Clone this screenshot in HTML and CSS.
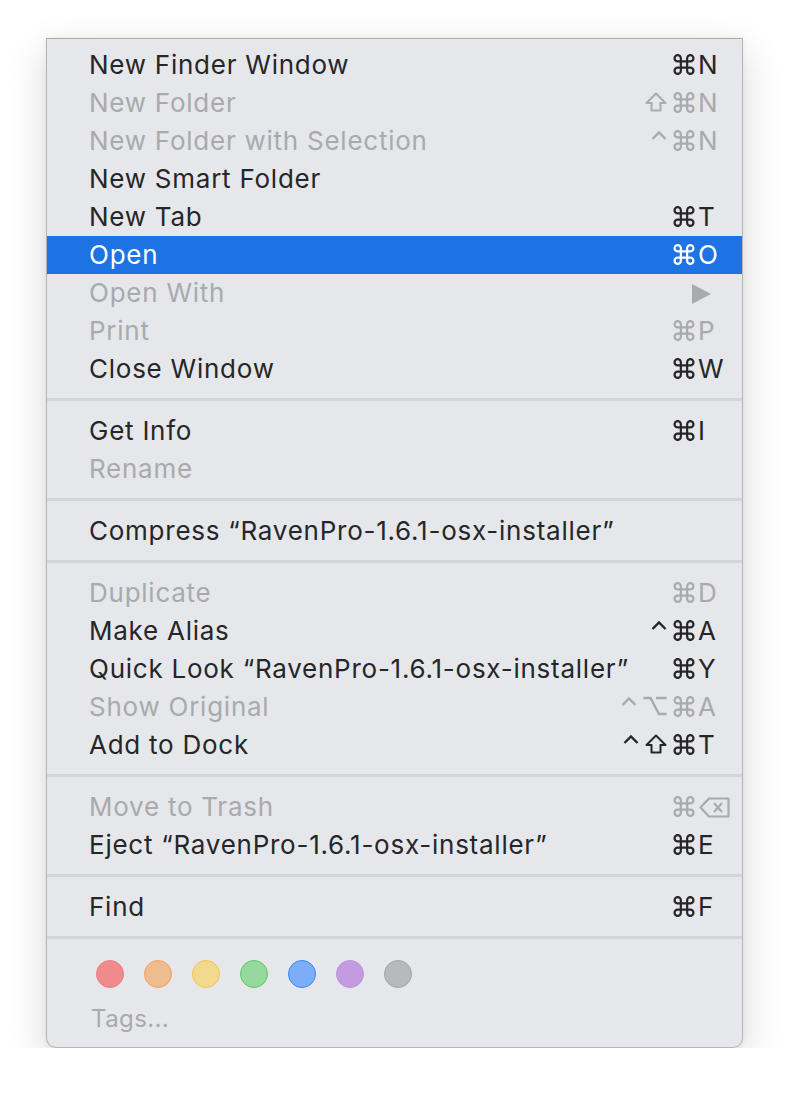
FILE: index.html
```html
<!DOCTYPE html>
<html>
    <head>
        <title>Finder File Menu</title>
        <meta charset="utf-8"/>
        <link rel="stylesheet" href="styles.css">
    </head>
    <body>
        <div class="menu">
            <div class="item">
                <span class="label">New Finder Window</span>
                <span class="mods"><svg class="cmd" viewBox="2 2 20 20"><path d="M15 6v12a3 3 0 1 0 3-3H6a3 3 0 1 0 3 3V6a3 3 0 1 0-3 3h12a3 3 0 1 0-3-3"/></svg></span>
                <span class="key">N</span>
            </div>
            <div class="item off">
                <span class="label">New Folder</span>
                <span class="mods"><svg class="shift" viewBox="0 0 22 20"><path d="M11 1.5L20.5 11H15.5V18.5H6.5V11H1.5Z"/></svg><svg class="cmd" viewBox="2 2 20 20"><path d="M15 6v12a3 3 0 1 0 3-3H6a3 3 0 1 0 3 3V6a3 3 0 1 0-3 3h12a3 3 0 1 0-3-3"/></svg></span>
                <span class="key">N</span>
            </div>
            <div class="item off">
                <span class="label">New Folder with Selection</span>
                <span class="mods"><svg class="ctrl" viewBox="0 0 16 20"><path d="M1.5 9L8 2.5L14.5 9"/></svg><svg class="cmd" viewBox="2 2 20 20"><path d="M15 6v12a3 3 0 1 0 3-3H6a3 3 0 1 0 3 3V6a3 3 0 1 0-3 3h12a3 3 0 1 0-3-3"/></svg></span>
                <span class="key">N</span>
            </div>
            <div class="item">
                <span class="label">New Smart Folder</span>
                <span class="mods"></span>
                <span class="key"></span>
            </div>
            <div class="item">
                <span class="label">New Tab</span>
                <span class="mods"><svg class="cmd" viewBox="2 2 20 20"><path d="M15 6v12a3 3 0 1 0 3-3H6a3 3 0 1 0 3 3V6a3 3 0 1 0-3 3h12a3 3 0 1 0-3-3"/></svg></span>
                <span class="key">T</span>
            </div>
            <div class="item active">
                <span class="label">Open</span>
                <span class="mods"><svg class="cmd" viewBox="2 2 20 20"><path d="M15 6v12a3 3 0 1 0 3-3H6a3 3 0 1 0 3 3V6a3 3 0 1 0-3 3h12a3 3 0 1 0-3-3"/></svg></span>
                <span class="key">O</span>
            </div>
            <div class="item off">
                <span class="label">Open With</span>
                <span class="mods"></span>
                <span class="key"><svg class="arrow" viewBox="0 0 19 20"><path d="M0 0L19 10L0 20Z"/></svg></span>
            </div>
            <div class="item off">
                <span class="label">Print</span>
                <span class="mods"><svg class="cmd" viewBox="2 2 20 20"><path d="M15 6v12a3 3 0 1 0 3-3H6a3 3 0 1 0 3 3V6a3 3 0 1 0-3 3h12a3 3 0 1 0-3-3"/></svg></span>
                <span class="key">P</span>
            </div>
            <div class="item">
                <span class="label">Close Window</span>
                <span class="mods"><svg class="cmd" viewBox="2 2 20 20"><path d="M15 6v12a3 3 0 1 0 3-3H6a3 3 0 1 0 3 3V6a3 3 0 1 0-3 3h12a3 3 0 1 0-3-3"/></svg></span>
                <span class="key">W</span>
            </div>
            <div class="sep"></div>
            <div class="item">
                <span class="label">Get Info</span>
                <span class="mods"><svg class="cmd" viewBox="2 2 20 20"><path d="M15 6v12a3 3 0 1 0 3-3H6a3 3 0 1 0 3 3V6a3 3 0 1 0-3 3h12a3 3 0 1 0-3-3"/></svg></span>
                <span class="key">I</span>
            </div>
            <div class="item off">
                <span class="label">Rename</span>
                <span class="mods"></span>
                <span class="key"></span>
            </div>
            <div class="sep"></div>
            <div class="item">
                <span class="label">Compress “RavenPro-1.6.1-osx-installer”</span>
                <span class="mods"></span>
                <span class="key"></span>
            </div>
            <div class="sep"></div>
            <div class="item off">
                <span class="label">Duplicate</span>
                <span class="mods"><svg class="cmd" viewBox="2 2 20 20"><path d="M15 6v12a3 3 0 1 0 3-3H6a3 3 0 1 0 3 3V6a3 3 0 1 0-3 3h12a3 3 0 1 0-3-3"/></svg></span>
                <span class="key">D</span>
            </div>
            <div class="item">
                <span class="label">Make Alias</span>
                <span class="mods"><svg class="ctrl" viewBox="0 0 16 20"><path d="M1.5 9L8 2.5L14.5 9"/></svg><svg class="cmd" viewBox="2 2 20 20"><path d="M15 6v12a3 3 0 1 0 3-3H6a3 3 0 1 0 3 3V6a3 3 0 1 0-3 3h12a3 3 0 1 0-3-3"/></svg></span>
                <span class="key">A</span>
            </div>
            <div class="item">
                <span class="label">Quick Look “RavenPro-1.6.1-osx-installer”</span>
                <span class="mods"><svg class="cmd" viewBox="2 2 20 20"><path d="M15 6v12a3 3 0 1 0 3-3H6a3 3 0 1 0 3 3V6a3 3 0 1 0-3 3h12a3 3 0 1 0-3-3"/></svg></span>
                <span class="key">Y</span>
            </div>
            <div class="item off">
                <span class="label">Show Original</span>
                <span class="mods"><svg class="ctrl" viewBox="0 0 16 20"><path d="M1.5 9L8 2.5L14.5 9"/></svg><svg class="opt" viewBox="0 0 24 20"><path d="M0.5 2H7.5L16 18H23.5M13 2H23.5"/></svg><svg class="cmd" viewBox="2 2 20 20"><path d="M15 6v12a3 3 0 1 0 3-3H6a3 3 0 1 0 3 3V6a3 3 0 1 0-3 3h12a3 3 0 1 0-3-3"/></svg></span>
                <span class="key">A</span>
            </div>
            <div class="item">
                <span class="label">Add to Dock</span>
                <span class="mods"><svg class="ctrl" viewBox="0 0 16 20"><path d="M1.5 9L8 2.5L14.5 9"/></svg><svg class="shift" viewBox="0 0 22 20"><path d="M11 1.5L20.5 11H15.5V18.5H6.5V11H1.5Z"/></svg><svg class="cmd" viewBox="2 2 20 20"><path d="M15 6v12a3 3 0 1 0 3-3H6a3 3 0 1 0 3 3V6a3 3 0 1 0-3 3h12a3 3 0 1 0-3-3"/></svg></span>
                <span class="key">T</span>
            </div>
            <div class="sep"></div>
            <div class="item off">
                <span class="label">Move to Trash</span>
                <span class="mods"><svg class="cmd" viewBox="2 2 20 20"><path d="M15 6v12a3 3 0 1 0 3-3H6a3 3 0 1 0 3 3V6a3 3 0 1 0-3 3h12a3 3 0 1 0-3-3"/></svg></span>
                <span class="key"><svg class="del" viewBox="0 0 31 21"><path d="M1.5 10.5L10 1.5H29.5V19.5H10Z M15 6L23 15 M23 6L15 15"/></svg></span>
            </div>
            <div class="item">
                <span class="label">Eject “RavenPro-1.6.1-osx-installer”</span>
                <span class="mods"><svg class="cmd" viewBox="2 2 20 20"><path d="M15 6v12a3 3 0 1 0 3-3H6a3 3 0 1 0 3 3V6a3 3 0 1 0-3 3h12a3 3 0 1 0-3-3"/></svg></span>
                <span class="key">E</span>
            </div>
            <div class="sep"></div>
            <div class="item">
                <span class="label">Find</span>
                <span class="mods"><svg class="cmd" viewBox="2 2 20 20"><path d="M15 6v12a3 3 0 1 0 3-3H6a3 3 0 1 0 3 3V6a3 3 0 1 0-3 3h12a3 3 0 1 0-3-3"/></svg></span>
                <span class="key">F</span>
            </div>
            <div class="sep"></div>
            <div class="tags">
                <span class="dot red"></span>
                <span class="dot orange"></span>
                <span class="dot yellow"></span>
                <span class="dot green"></span>
                <span class="dot blue"></span>
                <span class="dot purple"></span>
                <span class="dot gray"></span>
            </div>
            <div class="tags-label">Tags...</div>
        </div>
    </body>
</html>
```
FILE: styles.css
```css
* {
    box-sizing: border-box;
}
body, html {
    margin: 0;
    padding: 0;
    background: #fff;
}
body {
    padding: 38px 0 0 46px;
    font-family: 'Inter', 'Noto Sans', sans-serif;
    font-size: 26px;
    color: #262628;
}

.menu {
    width: 697px;
    height: 1010px;
    background: #e5e7ea;
    border: 1px solid #b4b5b8;
    border-top-color: #a9aaad;
    border-radius: 0 0 10px 10px;
    padding-top: 7px;
    box-shadow: 0 14px 40px rgba(0, 0, 0, 0.16), 0 0 6px rgba(0, 0, 0, 0.06);
}

.item {
    display: grid;
    grid-template-columns: 1fr auto 44px;
    align-items: center;
    height: 38px;
    padding: 0 0 0 42px;
    line-height: 38px;
    white-space: nowrap;
}
.label {
    letter-spacing: 0.75px;
}
.item.off {
    color: #a9aaad;
}
.item.active {
    background: #1d73e4;
    color: #fff;
}

.mods {
    display: flex;
    align-items: center;
    justify-content: flex-end;
    gap: 6px;
    padding-right: 3px;
}
.key {
    display: flex;
    align-items: center;
}

svg {
    display: block;
    fill: none;
    stroke: currentColor;
}
.cmd {
    width: 22px;
    height: 21px;
    stroke-width: 2.1;
    margin-top: -2px;
}
.shift {
    width: 22px;
    height: 20px;
    stroke-width: 2;
    stroke-linejoin: round;
    margin-top: -2px;
}
.ctrl {
    width: 16px;
    height: 20px;
    stroke-width: 2.4;
    margin-top: -2px;
}
.opt {
    width: 24px;
    height: 20px;
    stroke-width: 2.4;
    margin-top: -2px;
}
.del {
    width: 31px;
    height: 21px;
    stroke-width: 2.2;
    stroke-linejoin: round;
    margin: 1px 0 0 1px;
}
.arrow {
    width: 19px;
    height: 20px;
    fill: currentColor;
    stroke: none;
    margin: 1px 0 0 -6px;
}

.sep {
    height: 3px;
    margin: 10px 0 11px;
    background: #d3d5d8;
}

.tags {
    display: flex;
    gap: 20px;
    padding: 10px 0 0 49px;
}
.dot {
    width: 28px;
    height: 28px;
    border-radius: 50%;
    border: 1px solid;
}
.red { background: #f08a8b; border-color: #ee7a7c; }
.orange { background: #efbc8f; border-color: #f2a05c; }
.yellow { background: #f3d98f; border-color: #f3c448; }
.green { background: #95d99d; border-color: #5cc768; }
.blue { background: #7aaef6; border-color: #3a86f3; }
.purple { background: #c39be0; border-color: #bc90dc; }
.gray { background: #b8b9bb; border-color: #a2a3a6; }

.tags-label {
    padding: 16px 0 0 44px;
    font-size: 24px;
    letter-spacing: 0.4px;
    color: #a9aaad;
}
```
